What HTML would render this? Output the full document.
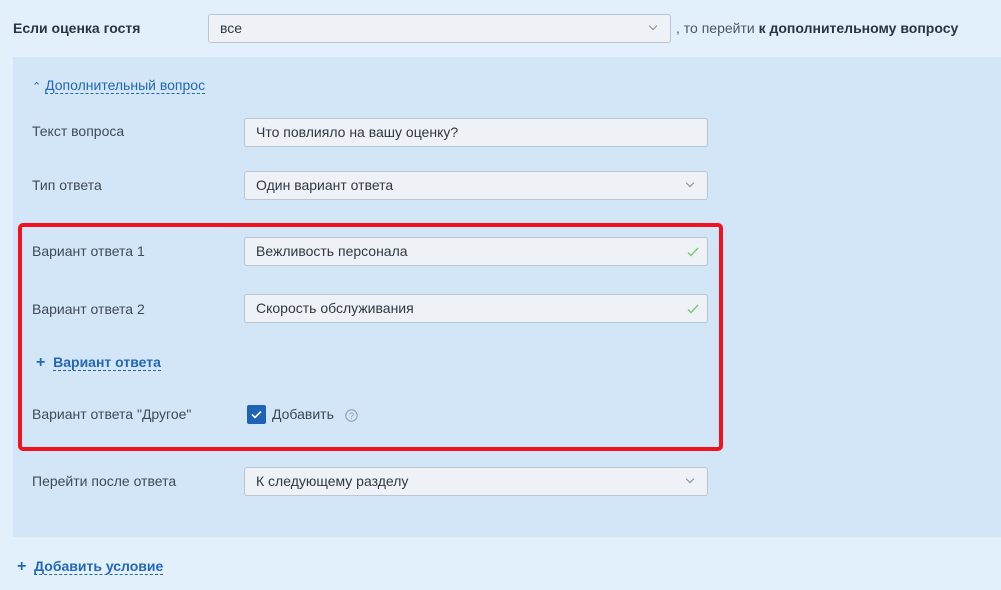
<!DOCTYPE html>
<html><head><meta charset="utf-8"><style>
*{box-sizing:border-box;margin:0;padding:0}
body{width:1001px;height:590px;background:#e2f0fc;font-family:"Liberation Sans","DejaVu Sans",sans-serif;font-size:14px;color:#414a56;position:relative;overflow:hidden}
.a{position:absolute;white-space:nowrap}
.inp{position:absolute;background:#eef2f6;border:1px solid #b9c6d3;border-radius:3px;height:29px;padding-left:11px;line-height:27px;color:#2f3842}
.panel{position:absolute;left:13px;top:57px;width:988px;height:480px;background:#d3e6f7}
.lnk{color:#2368b8;border-bottom:1px dashed #2368b8}
.chev{position:absolute;right:14px;top:8px;width:6px;height:6px;border-right:1px solid #7f8a98;border-bottom:1px solid #7f8a98;transform:rotate(45deg)}
.ok{position:absolute;right:8px;top:8px}
</style></head><body>
<div class="a" style="left:13px;top:20px;font-weight:bold;color:#2d3440">Если оценка гостя</div>
<div class="inp" style="left:208px;top:14px;width:463px;">все<div class="chev"></div></div>
<div class="a" style="left:676px;top:20px;color:#4c5563">, то перейти <b style="color:#2d3440">к дополнительному вопросу</b></div>
<div class="panel"></div>
<div class="a" style="left:32px;top:77px;color:#2368b8"><span style="font-size:11px">⌃</span> <span class="lnk">Дополнительный вопрос</span></div>
<div class="a" style="left:32px;top:123px">Текст вопроса</div>
<div class="inp" style="left:244px;top:118px;width:464px">Что повлияло на вашу оценку?</div>
<div class="a" style="left:32px;top:177px">Тип ответа</div>
<div class="inp" style="left:244px;top:171px;width:464px">Один вариант ответа<div class="chev"></div></div>
<div class="a" style="left:18px;top:223px;width:705px;height:228px;border:4px solid #f0121e;border-radius:5px"></div>
<div class="a" style="left:32px;top:243px">Вариант ответа 1</div>
<div class="inp" style="left:244px;top:237px;width:464px">Вежливость персонала<svg class="ok" width="12" height="12" viewBox="0 0 12 12"><path d="M1 6.5l3 3L11 2" stroke="#7cc47e" stroke-width="1.4" fill="none"/></svg></div>
<div class="a" style="left:32px;top:301px">Вариант ответа 2</div>
<div class="inp" style="left:244px;top:294px;width:464px">Скорость обслуживания<svg class="ok" width="12" height="12" viewBox="0 0 12 12"><path d="M1 6.5l3 3L11 2" stroke="#7cc47e" stroke-width="1.4" fill="none"/></svg></div>
<div class="a" style="left:36px;top:354px;color:#2368b8;font-weight:bold"><span style="font-size:16px">+</span>&nbsp; <span class="lnk">Вариант ответа</span></div>
<div class="a" style="left:32px;top:406px">Вариант ответа "Другое"</div>
<div class="a" style="left:247px;top:405px;width:19px;height:19px;background:#1f63b8;border-radius:2px"><svg width="19" height="19" viewBox="0 0 19 19"><path d="M5 9.5l3 3 6-6" stroke="#fff" stroke-width="1.6" fill="none"/></svg></div>
<div class="a" style="left:272px;top:406px;color:#3c4552">Добавить</div>
<svg class="a" style="left:345px;top:409px" width="13" height="13" viewBox="0 0 13 13"><circle cx="6.5" cy="6.5" r="5.7" stroke="#8e9aa8" fill="none"/><text x="6.5" y="10" font-size="9" text-anchor="middle" fill="#8e9aa8" font-family="Liberation Sans">?</text></svg>
<div class="a" style="left:32px;top:473px">Перейти после ответа</div>
<div class="inp" style="left:244px;top:467px;width:464px">К следующему разделу<div class="chev"></div></div>
<div class="a" style="left:17px;top:558px;color:#2368b8;font-weight:bold"><span style="font-size:16px">+</span>&nbsp; <span class="lnk">Добавить условие</span></div>
</body></html>
